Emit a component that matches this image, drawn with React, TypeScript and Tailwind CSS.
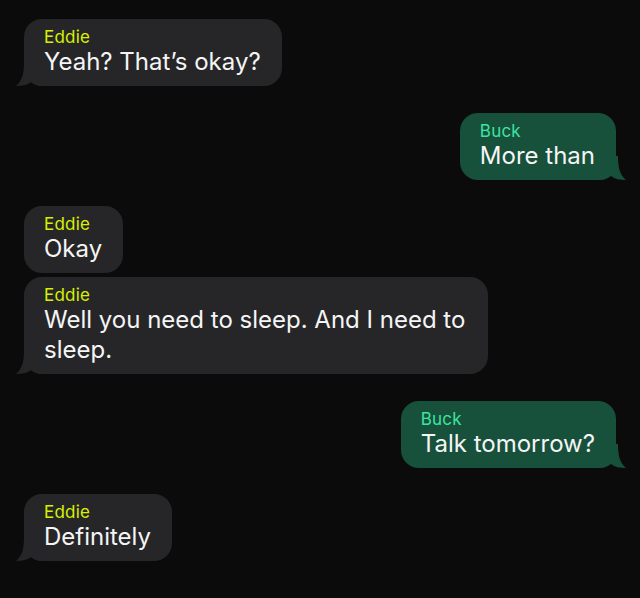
import React from "react";

type Msg = { from: "Eddie" | "Buck"; text: string; tail: boolean };

const groups: Msg[][] = [
  [{ from: "Eddie", text: "Yeah? That\u2019s okay?", tail: true }],
  [{ from: "Buck", text: "More than", tail: true }],
  [
    { from: "Eddie", text: "Okay", tail: false },
    { from: "Eddie", text: "Well you need to sleep. And I need to sleep.", tail: true },
  ],
  [{ from: "Buck", text: "Talk tomorrow?", tail: true }],
  [{ from: "Eddie", text: "Definitely", tail: true }],
];

function Tail({ right, color }: { right: boolean; color: string }) {
  return (
    <svg
      width="26"
      height="24"
      viewBox="0 0 26 24"
      className={right ? "absolute -right-[10px] bottom-0 -scale-x-100" : "absolute -left-[8px] bottom-0"}
      fill={color}
    >
      <path d="M8 0 C8 12 6 19 0 24 C6 24 11 23 15 20 C18 22 21 24 26 24 L26 0 Z" />
    </svg>
  );
}

function Bubble({ m }: { m: Msg }) {
  const buck = m.from === "Buck";
  const color = buck ? "#17503b" : "#262628";
  return (
    <div className={buck ? "flex justify-end" : "flex justify-start"}>
      <div
        className={
          "relative max-w-[464px] rounded-[18px] pl-5 pr-[21px] pt-[9px] pb-[9px] " +
          (buck ? "bg-[#17503b]" : "bg-[#262628]")
        }
      >
        {m.tail && <Tail right={buck} color={color} />}
        <div className="relative">
          <div
            className={
              "text-[17px] leading-[19px] tracking-[0.2px] " +
              (buck ? "text-[#3ee3a2]" : "text-[#d9f000]")
            }
          >
            {m.from}
          </div>
          <div className="text-[24px] leading-[30px] text-[#f5f5f5]">{m.text}</div>
        </div>
      </div>
    </div>
  );
}

export default function App() {
  return (
    <div
      className="h-[598px] w-[640px] overflow-hidden bg-[#0b0b0b] pl-6 pr-[24px] pt-[19px]"
      style={{ fontFamily: "Inter, 'Noto Sans', sans-serif" }}
    >
      <div className="flex flex-col gap-[26.5px]">
        {groups.map((g, i) => (
          <div key={i} className="flex flex-col gap-1">
            {g.map((m, j) => (
              <Bubble key={j} m={m} />
            ))}
          </div>
        ))}
      </div>
    </div>
  );
}
